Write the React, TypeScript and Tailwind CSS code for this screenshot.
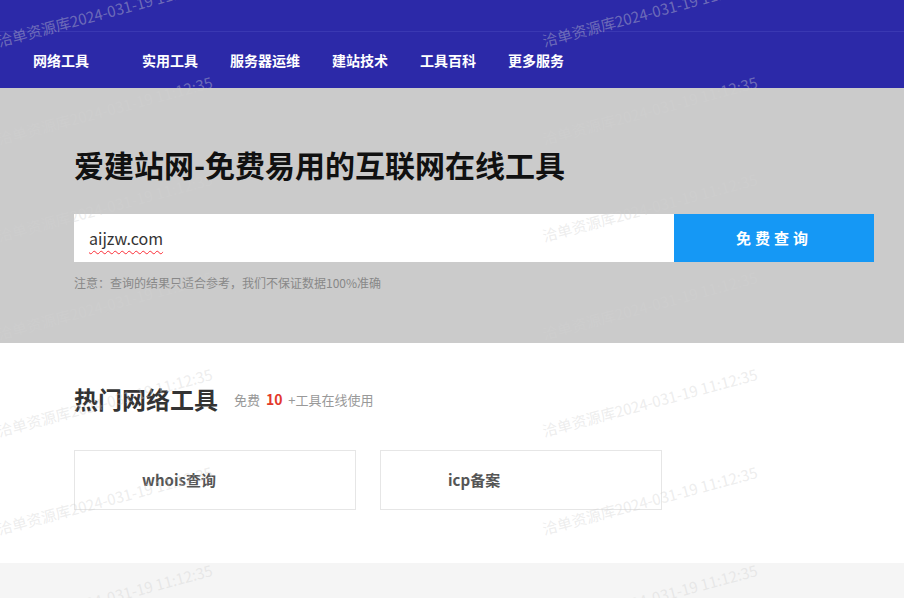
const navItems = ["网络工具", "实用工具", "服务器运维", "建站技术", "工具百科", "更多服务"]

const tools = [{ name: "whois查询" }, { name: "icp备案" }]

const watermarkRows = [50, 148, 245, 343, 440, 538, 636]
const watermarkCols = [0, 545]

function Watermarks() {
  return (
    <div className="pointer-events-none absolute inset-0 overflow-hidden">
      {watermarkRows.map((y) =>
        watermarkCols.map((x) => (
          <span
            key={`${x}-${y}`}
            className="absolute origin-bottom-left -rotate-[15deg] whitespace-nowrap text-[15px] leading-[18px] text-[rgba(210,210,210,0.4)]"
            style={{ left: x, top: y - 18 }}
          >
            洽单资源库2024-031-19 11:12:35
          </span>
        ))
      )}
    </div>
  )
}

export default function App() {
  return (
    <div className="relative h-[598px] overflow-hidden bg-[#f5f5f5] font-['Noto_Sans_CJK_SC',sans-serif]">
      <header className="bg-[#2c29a8]">
        <div className="h-[32px] border-b border-[#3a38b2]"></div>
        <nav className="flex h-[56px] items-center pl-[33px]">
          {navItems.map((item, i) => (
            <a
              key={item}
              className={`text-[14px] font-bold text-white ${i === 0 ? "mr-[53px]" : "mr-[32px]"}`}
            >
              {item}
            </a>
          ))}
        </nav>
      </header>

      <section className="h-[255px] bg-[#cbcbcb] pl-[74px] pt-[54px]">
        <h1 className="text-[30px] font-bold leading-[44px] text-[#111]">爱建站网-免费易用的互联网在线工具</h1>
        <div className="mt-[28px] flex h-[48px] w-[800px]">
          <div className="flex flex-1 items-center bg-white pl-[15px]">
            <span className="text-[16px] text-[#333] underline decoration-red-500 decoration-wavy decoration-1 underline-offset-[5px]">
              aijzw.com
            </span>
          </div>
          <button className="w-[200px] bg-[#1598f5] text-[15px] font-bold tracking-[4px] text-white">免费查询</button>
        </div>
        <p className="mt-[12px] text-[12px] text-[#888]">注意：查询的结果只适合参考，我们不保证数据100%准确</p>
      </section>

      <section className="h-[220px] bg-white pl-[74px] pt-[38px]">
        <div className="flex items-center">
          <h2 className="text-[24px] font-bold leading-[36px] text-[#333]">热门网络工具</h2>
          <span className="ml-[16px] text-[13px] text-[#999]">
            免费 <b className="mx-[3px] text-[14px] text-[#e3392b]">10</b> +工具在线使用
          </span>
        </div>
        <div className="mt-[33px] flex gap-[24px]">
          {tools.map((tool) => (
            <div key={tool.name} className="flex h-[60px] w-[282px] items-center border border-[#e6e6e6] pl-[67px]">
              <span className="text-[15px] font-bold text-[#555]">{tool.name}</span>
            </div>
          ))}
        </div>
      </section>

      <Watermarks />
    </div>
  )
}
